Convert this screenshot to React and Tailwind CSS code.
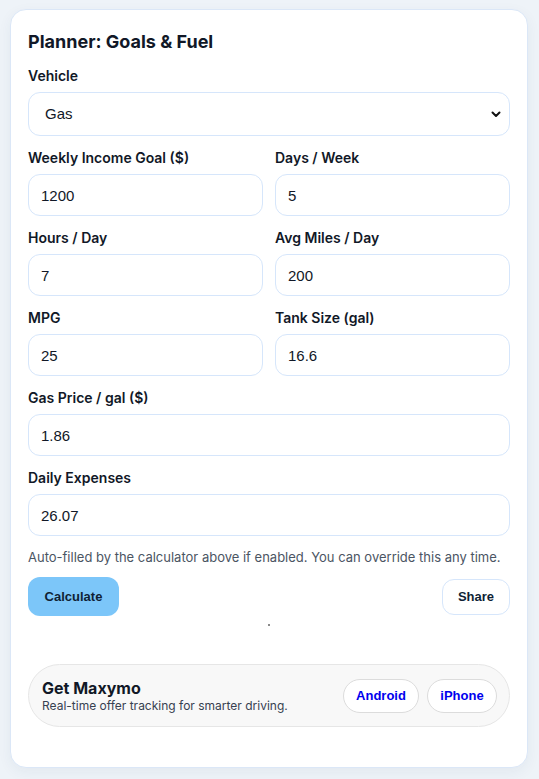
import { useState } from 'react';

const inputCls =
  "w-full h-[42px] rounded-xl border border-[#d6e6fb] bg-white px-3 font-['Liberation_Sans',Arial,sans-serif] text-[15px] text-[#111827] outline-none";

function Field({ label, value, onChange }) {
  return (
    <div className="flex flex-col">
      <label className="mb-2 text-sm leading-4 font-semibold text-[#111827]">{label}</label>
      <input type="text" value={value} onChange={(e) => onChange(e.target.value)} className={inputCls} />
    </div>
  );
}

export default function App() {
  const [form, setForm] = useState({
    vehicle: 'Gas',
    weeklyGoal: '1200',
    daysPerWeek: '5',
    hoursPerDay: '7',
    milesPerDay: '200',
    mpg: '25',
    tankSize: '16.6',
    gasPrice: '1.86',
    dailyExpenses: '26.07',
  });

  const set = (key) => (value) => setForm((prev) => ({ ...prev, [key]: value }));

  return (
    <div className="min-h-screen bg-[#eef3f8] pt-[9px] pb-[10px] pl-[10px] pr-[11px] font-['Inter',sans-serif]">
      <div className="rounded-2xl border border-[#dbe7f7] bg-white px-[17px] pt-[18px] pb-[40px] shadow-[0_4px_14px_rgba(30,60,110,0.06)]">
        <h2 className="text-lg leading-7 font-bold text-[#111827]">Planner: Goals &amp; Fuel</h2>

        {/* Vehicle */}
        <div className="mt-3 flex flex-col">
          <label className="mb-2 text-sm leading-4 font-semibold text-[#111827]">Vehicle</label>
          <div className="relative">
            <select
              value={form.vehicle}
              onChange={(e) => set('vehicle')(e.target.value)}
              className="w-full h-[44px] appearance-none rounded-xl border border-[#d6e6fb] bg-white pl-4 pr-8 font-['Liberation_Sans',Arial,sans-serif] text-[15px] text-[#111827] outline-none"
            >
              <option>Gas</option>
              <option>Hybrid</option>
              <option>EV</option>
            </select>
            <svg
              className="pointer-events-none absolute right-[8px] top-1/2 -translate-y-1/2"
              width="12"
              height="12"
              viewBox="0 0 12 12"
              fill="none"
            >
              <path d="M2.5 4.5 6 8l3.5-3.5" stroke="#111" strokeWidth="2" strokeLinecap="round" strokeLinejoin="round" />
            </svg>
          </div>
        </div>

        {/* Inputs */}
        <div className="mt-[14px] flex flex-col gap-[14px]">
          <div className="grid grid-cols-2 gap-x-3">
            <Field label="Weekly Income Goal ($)" value={form.weeklyGoal} onChange={set('weeklyGoal')} />
            <Field label="Days / Week" value={form.daysPerWeek} onChange={set('daysPerWeek')} />
          </div>
          <div className="grid grid-cols-2 gap-x-3">
            <Field label="Hours / Day" value={form.hoursPerDay} onChange={set('hoursPerDay')} />
            <Field label="Avg Miles / Day" value={form.milesPerDay} onChange={set('milesPerDay')} />
          </div>
          <div className="grid grid-cols-2 gap-x-3">
            <Field label="MPG" value={form.mpg} onChange={set('mpg')} />
            <Field label="Tank Size (gal)" value={form.tankSize} onChange={set('tankSize')} />
          </div>
          <Field label="Gas Price / gal ($)" value={form.gasPrice} onChange={set('gasPrice')} />
          <Field label="Daily Expenses" value={form.dailyExpenses} onChange={set('dailyExpenses')} />
        </div>

        <p className="mt-3 text-[13px] leading-[18px] text-[#4b5563]">
          Auto-filled by the calculator above if enabled. You can override this any time.
        </p>

        {/* Actions */}
        <div className="mt-[11px] flex items-center justify-between">
          <button className="h-[39px] w-[91px] rounded-xl bg-[#7cc6f9] font-['Liberation_Sans',Arial,sans-serif] text-[13px] font-bold text-[#0f1f35]">
            Calculate
          </button>
          <button className="h-[36px] w-[68px] rounded-xl border border-[#d6e6fb] bg-white font-['Liberation_Sans',Arial,sans-serif] text-[13px] font-bold text-[#0f1f35]">
            Share
          </button>
        </div>

        <div className="mt-2 flex justify-center">
          <span className="block h-[2px] w-[2px] bg-[#8a8a8a]" />
        </div>

        {/* App promo */}
        <div className="mt-[38px] flex h-[63px] items-center justify-between rounded-full border border-[#e6e6e6] bg-[#f8f8f8] pl-[13px] pr-[12px]">
          <div className="flex flex-col">
            <span className="text-base leading-5 font-bold text-[#111827]">Get Maxymo</span>
            <span className="text-xs leading-4 text-[#374151]">Real-time offer tracking for smarter driving.</span>
          </div>
          <div className="flex gap-2">
            <a className="flex h-[34px] w-[76px] items-center justify-center rounded-full border border-[#dcdcdc] bg-white font-['Liberation_Sans',Arial,sans-serif] text-[13px] font-bold text-[#0000ee]">
              Android
            </a>
            <a className="flex h-[34px] w-[70px] items-center justify-center rounded-full border border-[#dcdcdc] bg-white font-['Liberation_Sans',Arial,sans-serif] text-[13px] font-bold text-[#0000ee]">
              iPhone
            </a>
          </div>
        </div>
      </div>
    </div>
  );
}
